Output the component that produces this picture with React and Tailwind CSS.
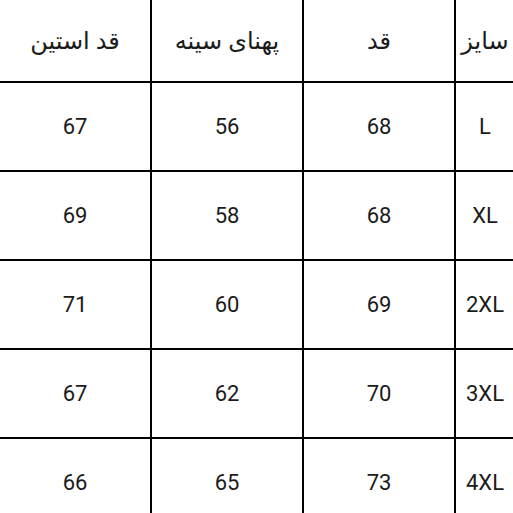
const headers = ["سایز", "قد", "پهنای سینه", "قد استین"]

const rows = [
  ["L", "68", "56", "67"],
  ["XL", "68", "58", "69"],
  ["2XL", "69", "60", "71"],
  ["3XL", "70", "62", "67"],
  ["4XL", "73", "65", "66"],
]

const App = () => {
  return (
    <div className="w-[513px] h-[513px] overflow-hidden bg-white">
      <div
        dir="rtl"
        className="grid w-[514px] grid-cols-[58px_152px_152px_152px] text-[#1b1b1b] font-['Roboto','DejaVu_Sans',sans-serif]"
      >
        {headers.map((h, i) => (
          <div
            key={h}
            className={`h-[83px] flex items-center justify-center border-b-2 border-black text-[24px] ${i > 0 ? "border-r-2" : ""}`}
          >
            {h}
          </div>
        ))}
        {rows.map((row, r) =>
          row.map((cell, i) => (
            <div
              key={r + "-" + i}
              className={`h-[89px] flex items-center justify-center border-b-2 border-black text-[22px] ${i > 0 ? "border-r-2" : ""}`}
            >
              <span dir="ltr">{cell}</span>
            </div>
          ))
        )}
      </div>
    </div>
  )
}

export default App
